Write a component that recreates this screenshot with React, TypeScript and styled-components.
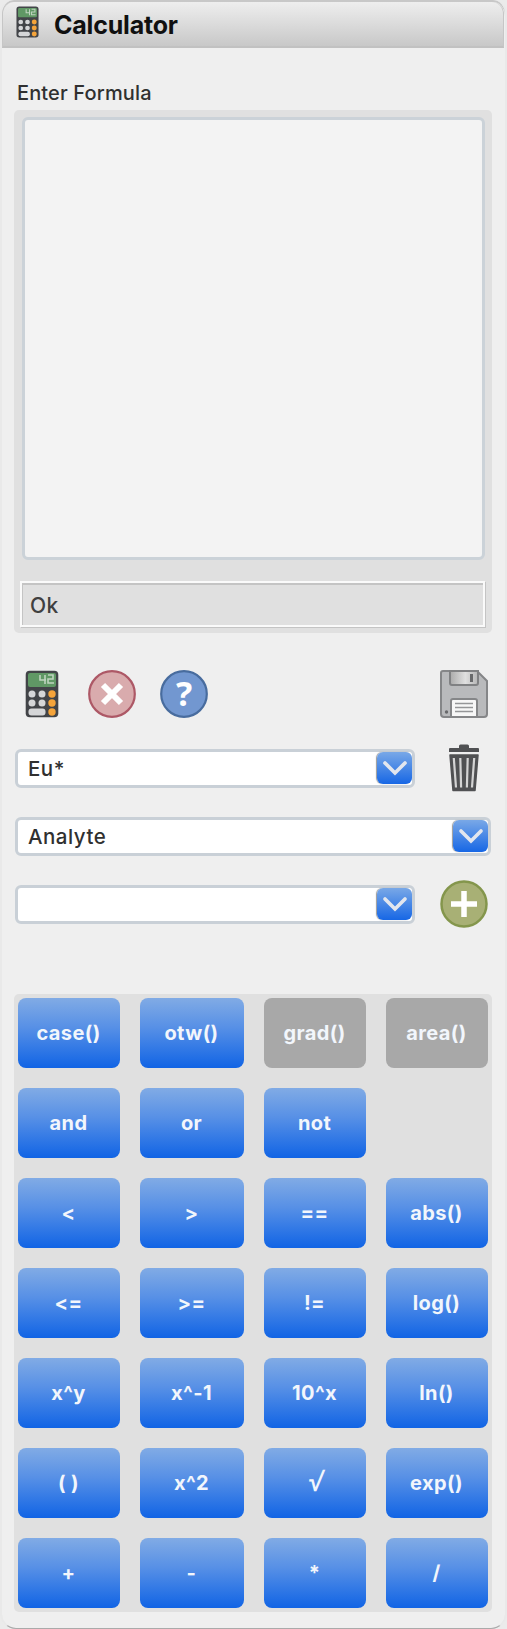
import React from "react";
import styled, { createGlobalStyle, css } from "styled-components";

const Global = createGlobalStyle`
  * { box-sizing: border-box; }
  html, body { margin: 0; background: #ebebeb; }
  body { font-family: Inter, "Liberation Sans", sans-serif; font-size: 20px; color: #303030; }
  svg { display: block; flex: none; }
  button { font: inherit; padding: 0; border: 0; background: none; }
`;

const Window = styled.main`
  width: 507px;
  height: 1629px;
  padding: 2px 1px 0 0;
  background: #efefef;
  border: solid #e9e9e9;
  border-width: 0 2px;
  border-bottom: 1px solid #aaa;
  border-radius: 14px 14px 16px 16px;
  box-shadow: inset 0 2px #c8c8c8;
`;

const Header = styled.header`
  height: 46px;
  display: flex;
  align-items: center;
  padding: 0 0 3px 13px;
  gap: 15px;
  border: 1px solid #c6c6c6;
  border-top: 0;
  border-bottom: 2px solid #c1c1c1;
  border-radius: 12px 12px 0 0;
  background: linear-gradient(#eeeeee, #c8c8c8);

  svg {
    position: relative;
    top: -1px;
  }
`;

const Title = styled.h1`
  margin: 5px 0 0;
  font-size: 25px;
  font-weight: 700;
  line-height: 32px;
  letter-spacing: -0.2px;
  color: #101010;
`;

const Content = styled.div`
  padding: 32px 10px 0 12px;
`;

const Label = styled.label`
  display: block;
  height: 30px;
  padding-left: 3px;
  line-height: 26px;
  letter-spacing: 0.14px;
  font-weight: 450;
`;

const EditorPanel = styled.section`
  width: 478px;
  height: 523px;
  padding: 7px 7px 6px;
  border-radius: 5px;
  background: #e0e0e0;
  display: flex;
  flex-direction: column;
  justify-content: space-between;
`;

const Editor = styled.textarea`
  display: block;
  width: 463px;
  height: 443px;
  margin-left: 1px;
  padding: 6px;
  resize: none;
  outline: none;
  border: 3px solid #cbd2d8;
  border-radius: 6px;
  background: #f3f3f3;
`;

const Status = styled.output`
  display: block;
  width: 465px;
  height: 46px;
  margin-left: -1px;
  border: 2px solid #fafafa;
  box-shadow: inset 1px 2px #c4c4c4, 1px 1px #c4c4c4;
  padding-left: 8px;
  font-size: 21px;
  font-weight: 450;
  letter-spacing: 0.5px;
  line-height: 46px;
  color: #404040;
`;

const Toolbar = styled.div`
  display: flex;
  align-items: center;
  gap: 24px;
  width: 474px;
  margin-top: 37px;
`;

const CalcSlot = styled.span`
  width: 50px;
  padding-left: 11px;
`;

const Spacer = styled.span`
  flex: 1;
`;

const Fields = styled.div`
  display: grid;
  grid-template-columns: minmax(0, 1fr);
  gap: 20px;
  width: 474px;
  margin-top: 26px;
`;

const FieldRow = styled.div`
  height: 48px;
  display: flex;
  align-items: center;
  justify-content: space-between;
`;

const Combo = styled.div<{ $wide?: boolean }>`
  flex: none;
  width: ${(p) => (p.$wide ? 476 : 400)}px;
  height: 39px;
  display: flex;
  align-items: center;
  justify-content: space-between;
  margin-left: 1px;
  padding: 0 0 0 10px;
  border: 3px solid #c9d0d7;
  border-radius: 6px;
  background: #fff;
`;

const ComboValue = styled.span`
  font-size: 20.5px;
  font-weight: 450;
  letter-spacing: 0.5px;
`;

const Arrow = styled.button`
  width: 35px;
  height: 32px;
  display: grid;
  place-items: center;
  border-radius: 6px;
  background: linear-gradient(#79a8e7, #1767e5);
  box-shadow: -1px 0 1px #999;
`;

const TrashSlot = styled.span`
  padding-right: 8px;
`;

const Keypad = styled.section`
  width: 478px;
  height: 618px;
  margin-top: 66px;
  padding: 4px;
  border-radius: 5px;
  background: #e0e0e0;
  display: grid;
  grid-template-columns: 102px 104px 102px 102px;
  grid-auto-rows: 70px;
  gap: 20px;
`;

const Key = styled.button<{ $disabled?: boolean }>`
  border-radius: 8px;
  color: #f2f6fc;
  font-size: 20px;
  font-weight: 700;
  line-height: 24px;
  padding: 0 1px 1px 0;
  ${(p) =>
    p.$disabled
      ? css`background: #a8a8a8;`
      : css`background: linear-gradient(#81abe5, #5790e6 42%, #1164e5);`}
`;

const KeyLabel = styled.span`
  letter-spacing: 0.4px;
  font-feature-settings: "calt" 0;
`;

const RootLabel = styled.span`
  display: inline-block;
  font: 700 27px/24px "Liberation Sans", sans-serif;
  padding-left: 4px;
  transform: skewX(-6deg);
`;

const CalculatorIcon = ({ width = 34, height = 48 }: { width?: number; height?: number }) => (
  <svg width={width} height={height} viewBox="0 0 34 48" preserveAspectRatio="none">
    <rect x=".7" y=".7" width="32.6" height="46.6" rx="4" fill="#424448" />
    <rect x="3" y="3" width="28" height="14" rx="2" fill="#609865" />
    <path d="M15 5v5h6M20 5v9M23 5h5v4h-5v4h6" fill="none" stroke="#bed4bf" strokeWidth="1.6" />
    <g fill="#d5d6d8">
      <circle cx="7" cy="24" r="3.5" />
      <circle cx="17" cy="24" r="3.5" />
      <circle cx="7" cy="33" r="3.5" />
      <circle cx="17" cy="33" r="3.5" />
      <rect x="3.5" y="38.5" width="17" height="7" rx="3" />
    </g>
    <g fill="#f5a43a">
      <circle cx="27" cy="24" r="3.7" />
      <circle cx="27" cy="33" r="3.7" />
      <circle cx="27" cy="42" r="3.7" />
    </g>
  </svg>
);

const CancelIcon = () => (
  <svg width="48" height="48" viewBox="0 0 48 48">
    <circle cx="24" cy="24" r="22.8" fill="#d9abad" stroke="#ad5866" strokeWidth="2.2" />
    <path d="M15 15 33 33M33 15 15 33" stroke="#fff" strokeWidth="6" />
  </svg>
);

const HelpText = styled.text`
  font: 700 34px "Noto Sans", sans-serif;
`;

const HelpIcon = () => (
  <svg width="48" height="48" viewBox="0 0 48 48">
    <circle cx="24" cy="24" r="22.8" fill="#7297d0" stroke="#486c9e" strokeWidth="2.2" />
    <HelpText x="24" y="36" textAnchor="middle" fill="#fff">?</HelpText>
  </svg>
);

const SaveIcon = () => (
  <svg width="48" height="48" viewBox="0 0 48 48">
    <defs>
      <linearGradient id="shutter" x2="1">
        <stop stopColor="#aaa" />
        <stop offset=".55" stopColor="#e0e0e0" />
        <stop offset="1" stopColor="#b5b5b5" />
      </linearGradient>
    </defs>
    <path d="M3 1h34l10 10v33q0 3-3 3H4q-3 0-3-3V3q0-2 2-2Z" fill="#b9babc" stroke="#858688" strokeWidth="2" />
    <path d="M10 1v12q0 2 2 2h24q2 0 2-2V1Z" fill="url(#shutter)" stroke="#808183" strokeWidth="2" />
    <path d="M30 4h3v8h-3z" fill="#68696b" />
    <path d="M11 47V31q0-2 2-2h22q2 0 2 2v16Z" fill="#f7f7f7" stroke="#858688" strokeWidth="2" />
    <path d="M15 33.5h18M15 37.5h18M15 41.5h18" stroke="#959698" strokeWidth="1.5" />
    <circle cx="6.5" cy="42" r="1.7" fill="#68696b" />
  </svg>
);

const TrashIcon = () => (
  <svg width="32" height="48" viewBox="0 0 32 48">
    <path d="M1 8V5q0-1 1-1h9V2q0-1.5 1.5-1.5h7Q21 .5 21 2v2h9q1 0 1 1v3Z" fill="#505153" />
    <path d="M2 11h28L27 46.5H5Z" fill="#505153" stroke="#505153" strokeWidth="1.5" strokeLinejoin="round" />
    <path d="M5.8 14 8 43.5M12.3 14l.8 29.5M19.7 14l-.8 29.5M26.2 14 24 43.5" stroke="#d4d4d4" strokeWidth="2.2" />
  </svg>
);

const AddIcon = () => (
  <svg width="48" height="48" viewBox="0 0 48 48">
    <circle cx="24" cy="24" r="22.5" fill="#a8b075" stroke="#84964c" strokeWidth="2.5" />
    <path d="M24 11v26M11 24h26" stroke="#fff" strokeWidth="5.5" />
  </svg>
);

const Select = ({ value, wide }: { value: string; wide?: boolean }) => (
  <Combo $wide={wide}>
    <ComboValue>{value}</ComboValue>
    <Arrow aria-label="Choose">
      <svg width="26" height="16" viewBox="0 0 26 16">
        <path d="m3 3 10 10L23 3" fill="none" stroke="#e2e6ee" strokeWidth="3.7" strokeLinecap="round" />
      </svg>
    </Arrow>
  </Combo>
);

const keys = [
  "case()", "otw()", "grad()", "area()",
  "and", "or", "not", "",
  "<", ">", "==", "abs()",
  "<=", ">=", "!=", "log()",
  "x^y", "x^-1", "10^x", "ln()",
  "( )", "x^2", "√", "exp()",
  "+", "-", "*", "/",
];

export default function App() {
  return (
    <>
      <Global />
      <Window>
        <Header>
          <CalculatorIcon width={23} height={32} />
          <Title>Calculator</Title>
        </Header>
        <Content>
          <Label htmlFor="formula">Enter Formula</Label>
          <EditorPanel>
            <Editor id="formula" />
            <Status>Ok</Status>
          </EditorPanel>
          <Toolbar>
            <CalcSlot><CalculatorIcon /></CalcSlot>
            <CancelIcon />
            <HelpIcon />
            <Spacer />
            <SaveIcon />
          </Toolbar>
          <Fields>
            <FieldRow><Select value="Eu*" /><TrashSlot><TrashIcon /></TrashSlot></FieldRow>
            <FieldRow><Select value="Analyte" wide /></FieldRow>
            <FieldRow><Select value="" /><AddIcon /></FieldRow>
          </Fields>
          <Keypad>
            {keys.map((key, i) =>
              key ? (
                <Key key={i} $disabled={key === "grad()" || key === "area()"}>
                  {key === "√" ? <RootLabel>√</RootLabel> : <KeyLabel>{key}</KeyLabel>}
                </Key>
              ) : (
                <span key={i} />
              ),
            )}
          </Keypad>
        </Content>
      </Window>
    </>
  );
}
